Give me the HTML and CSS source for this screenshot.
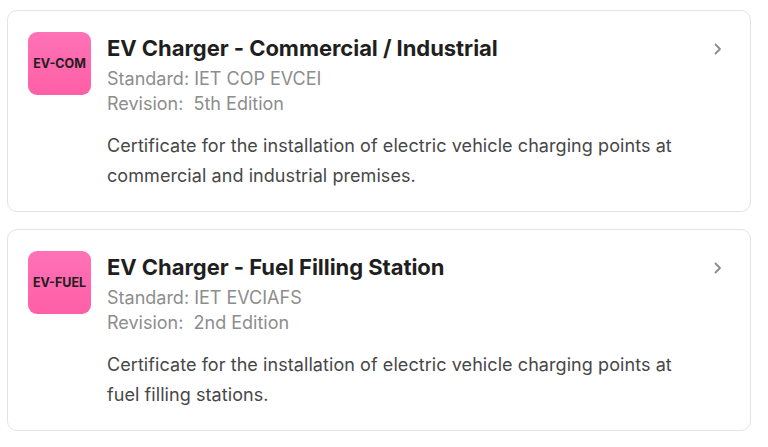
FILE: index.html
```html
<!DOCTYPE html>
<html>
<head>
<meta charset="utf-8">
<link rel="stylesheet" href="styles.css">
</head>
<body>
<div class="list">
  <div class="card">
    <div class="badge"><span>EV-COM</span></div>
    <div class="body">
      <div class="title">EV Charger - Commercial / Industrial</div>
      <div class="meta first">Standard: IET COP EVCEI</div>
      <div class="meta">Revision:&nbsp; 5th Edition</div>
      <p class="desc">Certificate for the installation of electric vehicle charging points at commercial and industrial premises.</p>
    </div>
    <svg class="chev" width="12" height="14" viewBox="0 0 12 14"><path d="M3.5 2.5 L8 7 L3.5 11.5" fill="none" stroke="#8c8c8c" stroke-width="1.8" stroke-linecap="round" stroke-linejoin="round"/></svg>
  </div>
  <div class="card">
    <div class="badge"><span>EV-FUEL</span></div>
    <div class="body">
      <div class="title">EV Charger - Fuel Filling Station</div>
      <div class="meta first">Standard: IET EVCIAFS</div>
      <div class="meta">Revision:&nbsp; 2nd Edition</div>
      <p class="desc">Certificate for the installation of electric vehicle charging points at fuel filling stations.</p>
    </div>
    <svg class="chev" width="12" height="14" viewBox="0 0 12 14"><path d="M3.5 2.5 L8 7 L3.5 11.5" fill="none" stroke="#8c8c8c" stroke-width="1.8" stroke-linecap="round" stroke-linejoin="round"/></svg>
  </div>
</div>
</body>
</html>
```
FILE: styles.css
```css
html, body {
  margin: 0;
  padding: 0;
  background: #ffffff;
  font-family: Inter, "Noto Sans", sans-serif;
}
.list {
  display: flex;
  flex-direction: column;
  gap: 17px;
  padding: 10px 17px 0 7px;
}
.card {
  display: flex;
  align-items: flex-start;
  border: 1px solid #e3e3e3;
  border-radius: 10px;
  padding: 21px 26px 20px 20px;
  height: 202px;
  box-sizing: border-box;
}
.badge {
  flex: none;
  width: 63px;
  height: 63px;
  border-radius: 9px;
  background: linear-gradient(180deg, #ff72b6 0%, #ff5fa6 100%);
  display: flex;
  align-items: center;
  justify-content: center;
}
.badge span {
  font-size: 12.5px;
  font-weight: 700;
  color: #1d1d1d;
}
.body {
  flex: 1;
  margin-left: 16px;
}
.title {
  font-size: 22px;
  font-weight: 700;
  color: #1f1f1f;
  line-height: 30px;
  margin-top: 1px;
  letter-spacing: -0.05px;
}
.meta {
  font-size: 18px;
  color: #8d8d8d;
  line-height: 25px;
}
.meta.first {
  margin-top: 3px;
}
.desc {
  margin: 15px 0 0 0;
  font-size: 18px;
  line-height: 30px;
  color: #474747;
  letter-spacing: 0.07px;
}
.chev {
  flex: none;
  margin-top: 10px;
  margin-left: 20px;
}
```
